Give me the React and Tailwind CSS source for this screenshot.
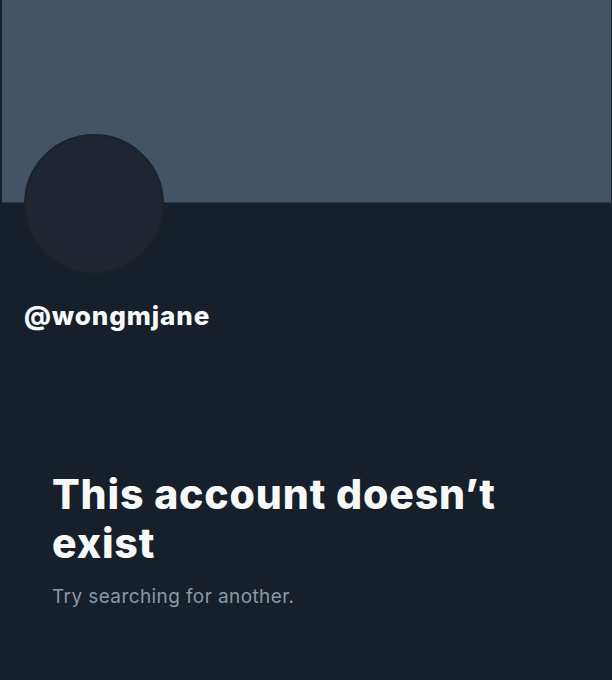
import React from 'react';

export default function App() {
  return (
    <div className="w-[612px] h-[680px] bg-[#17202a] overflow-hidden" style={{ fontFamily: 'Inter, "Open Sans", sans-serif' }}>
      {/* Banner */}
      <div className="h-[203px] ml-[2px] mr-[1px] bg-[#435466] border-b border-[#2c3846]" />

      {/* Avatar */}
      <div className="ml-[24px] -mt-[69px] w-[140px] h-[140px] rounded-full bg-[#1f2631] border-2 border-[#1a222c]" />

      {/* Handle */}
      <div className="ml-[24px] mt-[27px] text-[26px] leading-[30px] font-extrabold text-[#f7f9f9] tracking-[0.9px]">
        @wongmjane
      </div>

      {/* Message */}
      <div className="px-[52px] mt-[139px]">
        <h1 className="text-[41px] leading-[49px] font-extrabold text-[#f7f9f9] tracking-[0.85px]">
          This account doesn’t exist
        </h1>
        <p className="mt-[17px] text-[19px] leading-[24px] text-[#8b98a5] tracking-[0.4px]">
          Try searching for another.
        </p>
      </div>
    </div>
  );
}
